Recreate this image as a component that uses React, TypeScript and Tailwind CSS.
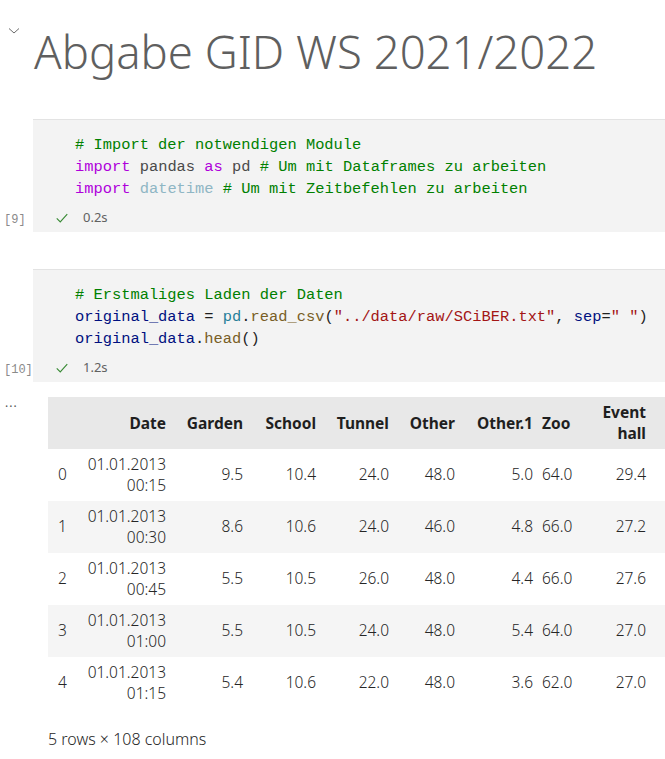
import React from "react";

const mono = { fontFamily: '"Liberation Mono", monospace' };

const rows = [
    ["0", "00:15", "9.5", "10.4", "24.0", "48.0", "5.0", "64.0", "29.4"],
    ["1", "00:30", "8.6", "10.6", "24.0", "46.0", "4.8", "66.0", "27.2"],
    ["2", "00:45", "5.5", "10.5", "26.0", "48.0", "4.4", "66.0", "27.6"],
    ["3", "01:00", "5.5", "10.5", "24.0", "48.0", "5.4", "64.0", "27.0"],
    ["4", "01:15", "5.4", "10.6", "22.0", "48.0", "3.6", "62.0", "27.0"],
];

const Check = () => (
    <svg width="14" height="14" viewBox="0 0 16 16" fill="none">
        <path d="M2 8.5 L6 12.5 L14 3.5" stroke="#388a34" strokeWidth="1.3" />
    </svg>
);

const Cell = ({ count, time, children }: { count: string; time: string; children: React.ReactNode }) => (
    <div className="flex">
        <div className="w-[33px] shrink-0 flex items-end pb-[3px] text-[12px] text-[#8a8a8a]" style={mono}>
            <span className="pl-[4px]">{count}</span>
        </div>
        <div className="flex-1 bg-[#f3f3f3] border-t border-[#e3e3e3] pl-[42px] pt-[14px] pb-[4px]">
            <div className="text-[15.4px] leading-[22px] whitespace-pre" style={mono}>
                {children}
            </div>
            <div className="flex items-center h-[20px] mt-[8px] -ml-[20px] gap-[14px]">
                <Check />
                <span className="text-[13px] text-[#616161]">{time}</span>
            </div>
        </div>
    </div>
);

export default function App() {
    return (
        <div className="bg-white w-[665px] h-[759px] overflow-hidden text-[#1f1f1f]" style={{ fontFamily: '"Noto Sans", sans-serif' }}>
            <div className="flex pt-[14px] h-[119px]">
                <div className="w-[34px] shrink-0 pl-[8px] pt-[13px]">
                    <svg width="12" height="8" viewBox="0 0 12 8" fill="none">
                        <path d="M1 1.5 L6 6 L11 1.5" stroke="#6b6b6b" strokeWidth="1" />
                    </svg>
                </div>
                <h1 className="text-[45.5px] leading-[74px] font-light text-[#5f5f5f]">
                    Abgabe GID WS 2021/2022
                </h1>
            </div>

            <Cell count="[9]" time="0.2s">
                <div className="text-[#008000]"># Import der notwendigen Module</div>
                <div>
                    <span className="text-[#af00db]">import</span> <span className="text-[#4a4a4a]">pandas</span>{" "}
                    <span className="text-[#af00db]">as</span> <span className="text-[#4a4a4a]">pd</span>{" "}
                    <span className="text-[#008000]"># Um mit Dataframes zu arbeiten</span>
                </div>
                <div>
                    <span className="text-[#af00db]">import</span> <span className="text-[#8fb6c4]">datetime</span>{" "}
                    <span className="text-[#008000]"># Um mit Zeitbefehlen zu arbeiten</span>
                </div>
            </Cell>

            <div className="h-[37px]" />

            <Cell count="[10]" time="1.2s">
                <div className="text-[#008000]"># Erstmaliges Laden der Daten</div>
                <div>
                    <span className="text-[#001080]">original_data</span> = <span className="text-[#267f99]">pd</span>.
                    <span className="text-[#795e26]">read_csv</span>(<span className="text-[#a31515]">"../data/raw/SCiBER.txt"</span>,{" "}
                    <span className="text-[#001080]">sep</span>=<span className="text-[#a31515]">" "</span>)
                </div>
                <div>
                    <span className="text-[#001080]">original_data</span>.<span className="text-[#795e26]">head</span>()
                </div>
            </Cell>

            <div className="flex mt-[15px]">
                <div className="w-[48px] shrink-0 pl-[5px] pt-[3px] text-[#555] text-[12px] leading-[14px] tracking-[1px]">···</div>
                <div className="flex-1 overflow-hidden">
                    <table className="table-fixed border-collapse text-[15.5px] text-[#262626] w-[760px]">
                        <colgroup>
                            <col className="w-[24px]" />
                            <col className="w-[103px]" />
                            <col className="w-[77px]" />
                            <col className="w-[73px]" />
                            <col className="w-[73px]" />
                            <col className="w-[66px]" />
                            <col className="w-[78px]" />
                            <col className="w-[37px]" />
                            <col className="w-[76px]" />
                            <col className="w-[153px]" />
                        </colgroup>
                        <thead>
                            <tr className="bg-[#e8e8e8] h-[52px]">
                                {["", "Date", "Garden", "School", "Tunnel", "Other", "Other.1", "Zoo", "Event hall", ""].map((h, i) => (
                                    <th key={i} className="text-right font-bold pr-[9px] leading-[21px] text-[15.5px] text-[#1f1f1f]">
                                        {h}
                                    </th>
                                ))}
                            </tr>
                        </thead>
                        <tbody className="font-light">
                            {rows.map((r, i) => (
                                <tr key={i} className={`h-[52px] ${i % 2 === 1 ? "bg-[#f5f5f5]" : "bg-white"}`}>
                                    <td className="pl-[10px] text-left">{r[0]}</td>
                                    <td className="text-right pr-[9px] leading-[21px]">
                                        <div>01.01.2013</div>
                                        <div>{r[1]}</div>
                                    </td>
                                    {r.slice(2).map((v, j) => (
                                        <td key={j} className="text-right pr-[9px]">
                                            {v}
                                        </td>
                                    ))}
                                    <td />
                                </tr>
                            ))}
                        </tbody>
                    </table>
                    <div className="mt-[18px] text-[16px] text-[#262626] font-light">5 rows × 108 columns</div>
                </div>
            </div>
        </div>
    );
}
